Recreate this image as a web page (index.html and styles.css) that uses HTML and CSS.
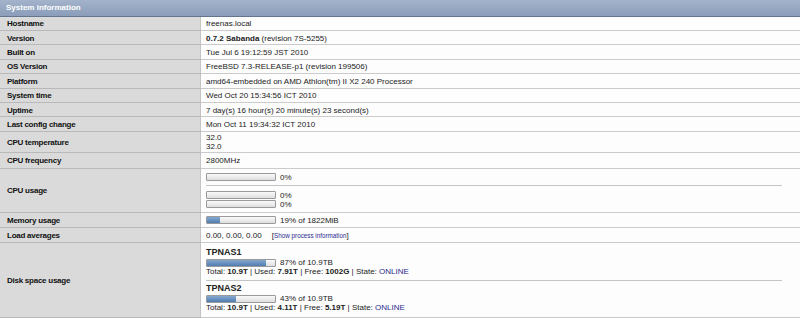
FILE: index.html
```html
<!DOCTYPE html>
<html lang="en">
<head>
  <meta charset="UTF-8" />
  <title>System information</title>
  <link rel="stylesheet" href="styles.css">
</head>
<body>
  <table class="sysinfo">
    <tr class="head"><td colspan="2">System information</td></tr>
    <tr><td class="label">Hostname</td><td class="value">freenas.local</td></tr>
    <tr><td class="label">Version</td><td class="value"><b>0.7.2 Sabanda</b> (revision 7S-5255)</td></tr>
    <tr><td class="label">Built on</td><td class="value">Tue Jul 6 19:12:59 JST 2010</td></tr>
    <tr><td class="label">OS Version</td><td class="value">FreeBSD 7.3-RELEASE-p1 (revision 199506)</td></tr>
    <tr><td class="label">Platform</td><td class="value">amd64-embedded on AMD Athlon(tm) II X2 240 Processor</td></tr>
    <tr><td class="label">System time</td><td class="value">Wed Oct 20 15:34:56 ICT 2010</td></tr>
    <tr><td class="label">Uptime</td><td class="value">7 day(s) 16 hour(s) 20 minute(s) 23 second(s)</td></tr>
    <tr><td class="label">Last config change</td><td class="value">Mon Oct 11 19:34:32 ICT 2010</td></tr>
    <tr class="temp"><td class="label">CPU temperature</td><td class="value">32.0<br>32.0</td></tr>
    <tr class="freq"><td class="label">CPU frequency</td><td class="value">2800MHz</td></tr>
    <tr class="cpu">
      <td class="label">CPU usage</td>
      <td class="value">
        <div class="meter"><span class="bar"><span class="fill" style="width:0%"></span></span>0%</div>
        <hr class="sep">
        <div class="meter"><span class="bar"><span class="fill" style="width:0%"></span></span>0%</div>
        <div class="meter"><span class="bar"><span class="fill" style="width:0%"></span></span>0%</div>
      </td>
    </tr>
    <tr class="mem">
      <td class="label">Memory usage</td>
      <td class="value"><div class="meter"><span class="bar"><span class="fill" style="width:19%"></span></span>19% of 1822MiB</div></td>
    </tr>
    <tr class="load">
      <td class="label">Load averages</td>
      <td class="value">0.00, 0.00, 0.00 <span class="procs">[<a href="#">Show process information</a>]</span></td>
    </tr>
    <tr class="disk">
      <td class="label">Disk space usage</td>
      <td class="value">
        <div class="pool">
          <div class="pool-name">TPNAS1</div>
          <div class="meter"><span class="bar"><span class="fill" style="width:87%"></span></span>87% of 10.9TB</div>
          <div class="pool-stats">Total: <b>10.9T</b> | Used: <b>7.91T</b> | Free: <b>1002G</b> | State: <a href="#">ONLINE</a></div>
        </div>
        <hr class="sep">
        <div class="pool">
          <div class="pool-name">TPNAS2</div>
          <div class="meter"><span class="bar"><span class="fill" style="width:43%"></span></span>43% of 10.9TB</div>
          <div class="pool-stats">Total: <b>10.9T</b> | Used: <b>4.11T</b> | Free: <b>5.19T</b> | State: <a href="#">ONLINE</a></div>
        </div>
      </td>
    </tr>
  </table>
</body>
</html>
```

FILE: styles.css
```css
body {
  margin: 0;
  background: #fdfdfd;
  font-family: 'Liberation Sans', Arial, sans-serif;
  font-size: 8px;
  color: #222;
}

.sysinfo {
  width: 100%;
  border-collapse: collapse;
}

.sysinfo td {
  padding: 1px 0 0;
}

.sysinfo tr {
  height: 14.43px;
}

.sysinfo tr.head {
  height: 16px;
}

.head td {
  padding: 0 0 0 6px;
  background: linear-gradient(#a3b3cb, #8b9dba);
  border-bottom: 1px solid #66758e;
  color: #fff;
  font-weight: bold;
}

.label {
  width: 193px;
  padding-left: 7px !important;
  background: #dadada;
  border-bottom: 1px solid #b9b9b9;
  border-right: 1px solid #c4c4c4;
  font-weight: bold;
  letter-spacing: -0.25px;
  color: #111;
}

.value {
  padding-left: 5px !important;
  background: #fdfdfd;
  border-bottom: 1px solid #cbcbcb;
}

.sysinfo tr.temp {
  height: 21px;
}

.sysinfo tr.freq {
  height: 16px;
}

.sysinfo tr.cpu {
  height: 44px;
}

.sysinfo tr.mem {
  height: 15px;
}

.sysinfo tr.load {
  height: 15px;
}

.sysinfo tr.disk {
  height: 75px;
}

.meter {
  display: flex;
  align-items: center;
  height: 9px;
}

.bar {
  display: inline-block;
  width: 68px;
  height: 6px;
  margin-right: 4px;
  border: 1px solid #9a9a9a;
  border-radius: 1px;
  background: linear-gradient(#fafafa, #dedede);
}

.fill {
  display: block;
  height: 100%;
  background: linear-gradient(#86a8cf, #4f7db0);
}

.sep {
  margin: 3px 18px 3px 0;
  border: 0;
  border-top: 1px solid #c4c4c4;
}

.cpu .sep {
  margin-bottom: 5px;
}

.disk .sep {
  margin: 3px 18px 2px 0;
}

.procs {
  margin-left: 8px;
}

.procs a,
.pool-stats a {
  color: #2b2b8f;
  text-decoration: none;
}

.procs a {
  font-size: 6.3px;
}

.pool-name {
  font-size: 9px;
  font-weight: bold;
  line-height: 11px;
}

.pool-stats {
  line-height: 10px;
}
```
